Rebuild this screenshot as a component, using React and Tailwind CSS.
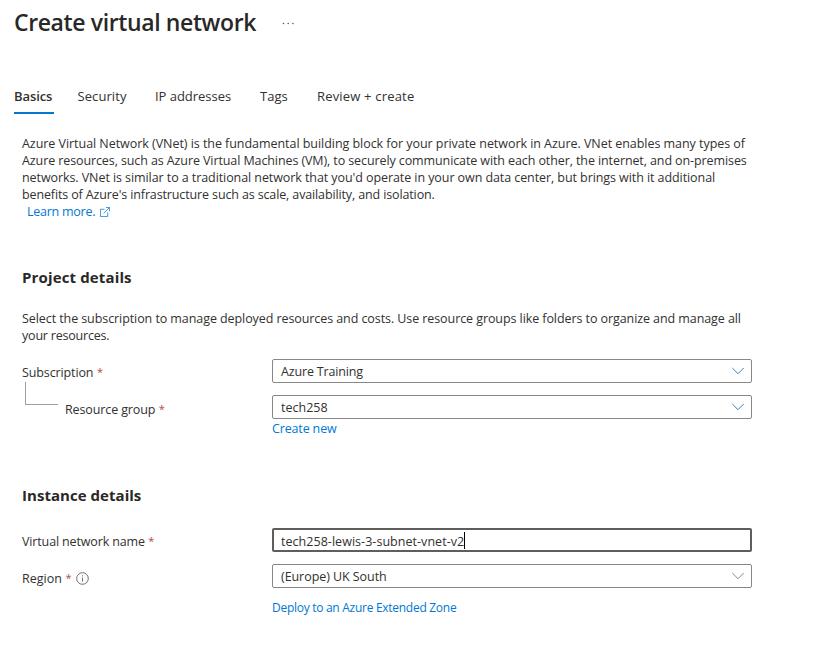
const Required = () => <span className="ml-[3.5px] inline-block h-[17px] -translate-y-[1px] align-top text-[11px] tracking-normal text-[#b4474c]">*</span>;

const Chevron = ({ className }) => (
  <svg className={`h-[8px] w-[14px] shrink-0 ${className}`} viewBox="0 0 14 8" fill="none" stroke="currentColor">
    <path d="M1.3 1L7 6.7L12.7 1" />
  </svg>
);

const Select = ({ children, chevron, tracking }) => (
  <div className="flex h-[24px] w-[480px] items-center justify-between rounded-[2px] border border-[#8a8886] pr-[6px] pl-[8px]">
    <span className={tracking}>{children}</span>
    <Chevron className={chevron} />
  </div>
);

const tabs = [
  { label: "Security", box: "w-[77.5px] tracking-[0.08px]" },
  { label: "IP addresses", box: "w-[105px] tracking-[-0.03px]" },
  { label: "Tags", box: "w-[57px] tracking-[0px]" },
  { label: "Review + create", box: "w-[110px] tracking-[0.18px]" },
];

export default function App() {
  return (
    <div className="h-[645px] w-[834px] overflow-hidden bg-white font-['Open_Sans','Noto_Sans',sans-serif] text-[12.5px] leading-[17px] whitespace-nowrap text-[#323130]">
      <header className="flex h-[45px] items-center pl-[14px]">
        <h1 className="-mt-[1px] w-[268px] text-[23px] leading-[32px] font-semibold tracking-[-0.38px] text-[#292827]">Create virtual network</h1>
        <svg className="mt-[2px] h-[3px] w-[13px]" viewBox="0 0 13 3" fill="#605e5c">
          <circle cx="1.5" cy="1.5" r="0.8" />
          <circle cx="6.2" cy="1.5" r="0.8" />
          <circle cx="10.9" cy="1.5" r="0.8" />
        </svg>
      </header>

      <nav className="mt-[37px] flex h-[32px] pl-[14px] text-[13px] leading-[29px]">
        <div className="mr-[23.5px] w-[40px] border-b-2 border-[#0078d4] font-semibold tracking-[-0.1px]">Basics</div>
        {tabs.map((t) => (
          <div key={t.label} className={t.box}>{t.label}</div>
        ))}
      </nav>

      <main className="pl-[22px]">
        <div className="mt-[21px]">
          <p className="tracking-[-0.045px]">Azure Virtual Network (VNet) is the fundamental building block for your private network in Azure. VNet enables many types of</p>
          <p className="tracking-[-0.1px]">Azure resources, such as Azure Virtual Machines (VM), to securely communicate with each other, the internet, and on-premises</p>
          <p className="tracking-[-0.077px]">networks. VNet is similar to a traditional network that you'd operate in your own data center, but brings with it additional</p>
          <p className="tracking-[-0.13px]">benefits of Azure's infrastructure such as scale, availability, and isolation.</p>
          <a className="flex items-center pl-[5px] text-[#0078d4]">
            <span className="w-[73px] tracking-[-0.25px]">Learn more.</span>
            <svg className="h-[10px] w-[10px]" viewBox="0 0 11 11" fill="none" stroke="currentColor" strokeWidth="0.8">
              <path d="M5 2.5H.5V10.5H8.5V6M6.5.5H10.5V4.5M10.5.5L4 7" />
            </svg>
          </a>
        </div>

        <h2 className="mt-[46px] text-[15px] leading-[22px] font-bold tracking-[0.14px] text-[#292827]">Project details</h2>
        <div className="mt-[22px]">
          <p className="tracking-[-0.08px]">Select the subscription to manage deployed resources and costs. Use resource groups like folders to organize and manage all</p>
          <p className="tracking-[-0.2px]">your resources.</p>
        </div>

        <div className="mt-[15px] flex">
          <div className="w-[250px] pt-[5px]">
            <div className="tracking-[-0.12px]">Subscription<Required /></div>
            <div className="flex pl-[3px]">
              <div className="mt-[1px] h-[23px] w-[33px] border-b border-l border-[#a19f9d]" />
              <div className="pt-[20px] pl-[7px] tracking-[-0.12px]">Resource group<Required /></div>
            </div>
          </div>
          <div>
            <Select chevron="text-[#3d80b5]" tracking="tracking-[-0.16px]">Azure Training</Select>
            <div className="mt-[12px]">
              <Select chevron="text-[#3d80b5]">tech258</Select>
            </div>
            <a className="mt-[1px] block tracking-[-0.15px] text-[#0078d4]">Create new</a>
          </div>
        </div>

        <h2 className="mt-[47px] text-[15px] leading-[22px] font-bold tracking-[0.04px] text-[#292827]">Instance details</h2>
        <div className="mt-[22px] flex">
          <div className="w-[250px] pt-[5px]">
            <div className="tracking-[-0.14px]">Virtual network name<Required /></div>
            <div className="mt-[20px] flex items-center">
              <span>Region<Required /></span>
              <svg className="ml-[4.5px] h-[13px] w-[13px]" viewBox="0 0 13 13" fill="none" stroke="#605e5c" strokeWidth="0.9">
                <circle cx="6.5" cy="6.5" r="5.8" />
                <path d="M6.5 5.5V9.5M6.5 3.3V4.3" />
              </svg>
            </div>
          </div>
          <div>
            <div className="flex h-[24px] w-[480px] items-center rounded-[2px] border-2 border-[#605e5c] pl-[7px]">
              <span className="mt-[2px] tracking-[0.04px]">tech258-lewis-3-subnet-vnet-v2</span>
              <span className="-ml-[0.5px] h-[17px] w-px bg-black" />
            </div>
            <div className="mt-[12px]">
              <Select chevron="text-[#8a8886]" tracking="tracking-[-0.06px]">(Europe) UK South</Select>
            </div>
            <a className="mt-[11px] block text-[12px] tracking-[-0.28px] text-[#0078d4]">Deploy to an Azure Extended Zone</a>
          </div>
        </div>
      </main>
    </div>
  );
}
